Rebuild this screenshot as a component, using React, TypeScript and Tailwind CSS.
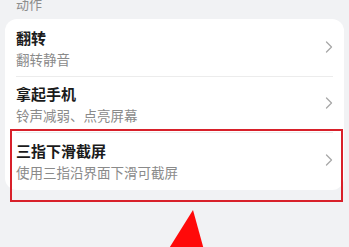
const rows = [
  { title: '翻转', sub: '翻转静音' },
  { title: '拿起手机', sub: '铃声减弱、点亮屏幕' },
  { title: '三指下滑截屏', sub: '使用三指沿界面下滑可截屏' },
];

const Chevron = () => (
  <svg width="8" height="12" viewBox="0 0 8 12" fill="none" className="shrink-0">
    <path d="M1.5 1 L6.5 6 L1.5 11" stroke="#a8a8a8" strokeWidth="1.3" strokeLinecap="round" strokeLinejoin="round" />
  </svg>
);

export default function App() {
  return (
    <div
      className="relative h-[247px] w-[349px] overflow-hidden bg-[#f1f2f4]"
      style={{ fontFamily: '"Noto Sans CJK SC", "Noto Sans", sans-serif' }}
    >
      <div className="-mt-[5px] px-4 text-[13px] leading-[18px] text-[#8d8d8d]">动作</div>

      <div className="mx-[5px] mt-[6px] rounded-[12px] bg-white pt-[2px]">
        {rows.map((r, i) => (
          <div key={r.title} className="px-[11px]">
            <div
              className={
                'flex h-[56px] items-center justify-between ' +
                (i < rows.length - 1 ? 'border-b border-[#ececec]' : '')
              }
            >
              <div className="flex flex-col">
                <span className="text-[15px] font-semibold leading-[20px] text-[#1b1b1b]">{r.title}</span>
                <span className="mt-[1px] text-[13.5px] leading-[20px] text-[#8a8a8a]">{r.sub}</span>
              </div>
              <div className="mt-[-3px]">
                <Chevron />
              </div>
            </div>
          </div>
        ))}
        <div className="h-[1px]" />
      </div>

      {/* highlight box */}
      <div className="absolute left-[10px] top-[129px] h-[73px] w-[333px] border-2 border-[#d8202a]" />

      {/* arrow */}
      <svg className="absolute left-0 top-0" width="349" height="247" viewBox="0 0 349 247">
        <polygon points="193,210 168,250 204,250" fill="#ff0a0a" />
      </svg>
    </div>
  );
}
